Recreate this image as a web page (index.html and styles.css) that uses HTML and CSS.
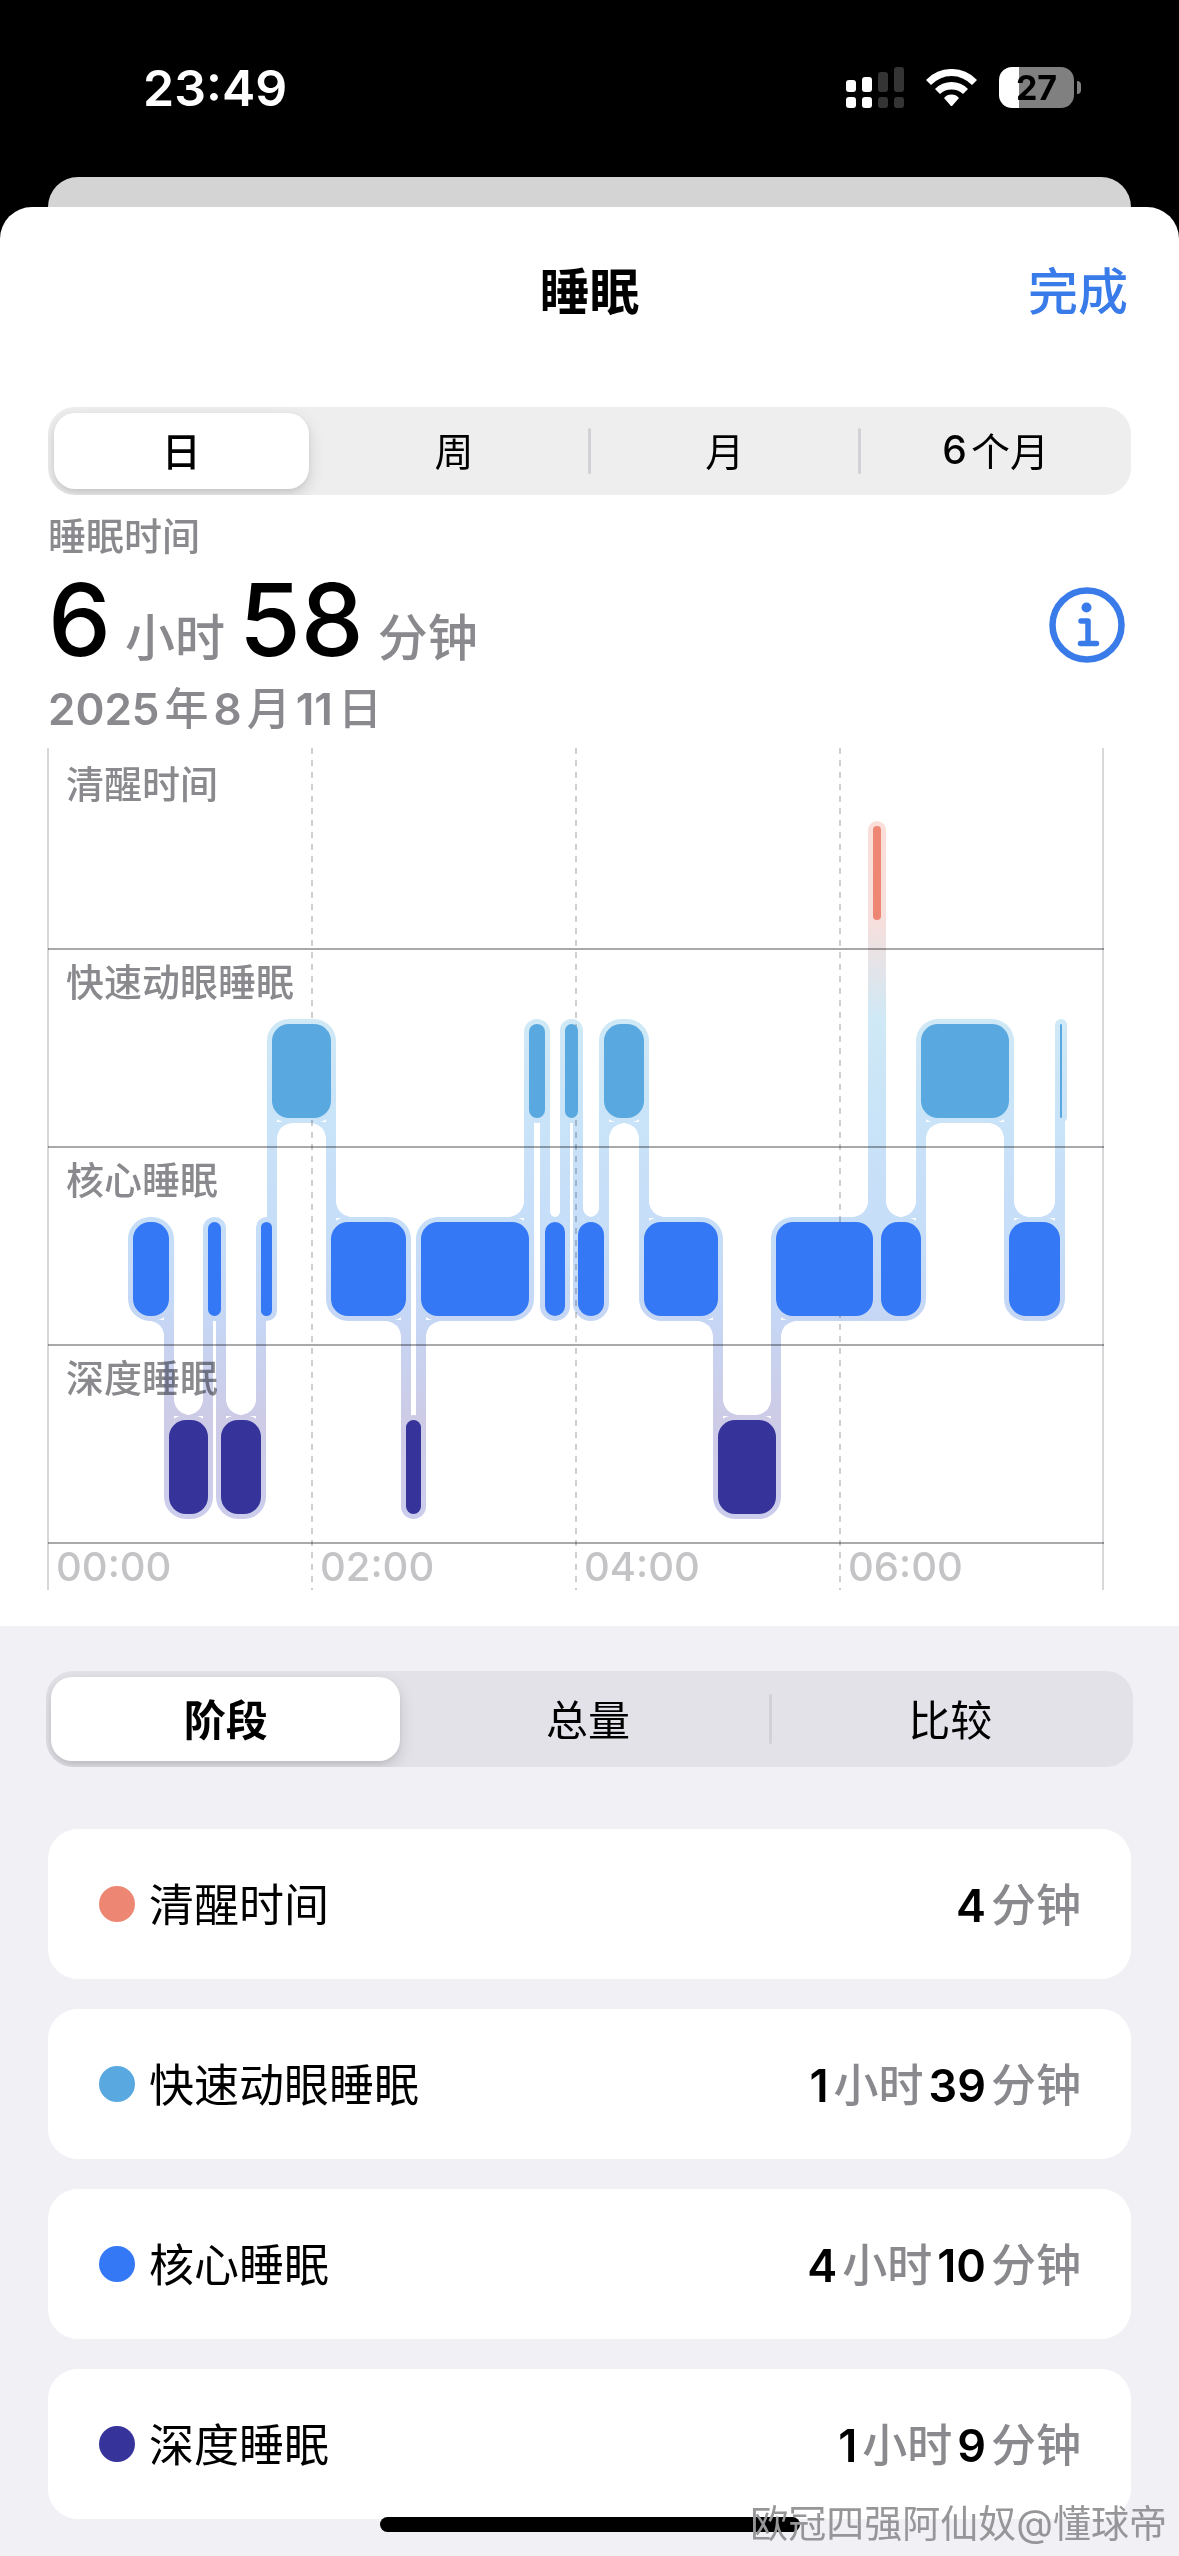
FILE: index.html
```html
<!DOCTYPE html>
<html lang="zh-CN">
<head>
  <meta charset="utf-8">
  <meta name="viewport" content="width=device-width, initial-scale=1">
  <title>睡眠</title>
  <link rel="stylesheet" href="styles.css">
</head>
<body>
  <div class="status-bar">
    <time class="clock">23:49</time>
    <div class="status-icons">
      <svg class="signal" viewBox="0 0 58 41" aria-hidden="true">
        <g fill="#fff">
          <rect x="0" y="13" width="10" height="12" rx="3"/>
          <rect x="16" y="10" width="10" height="15" rx="3"/>
          <rect x="0" y="30" width="10" height="11" rx="3"/>
          <rect x="16" y="30" width="10" height="11" rx="3"/>
        </g>
        <g fill="#343434">
          <rect x="32" y="5" width="10" height="20" rx="3"/>
          <rect x="48" y="0" width="10" height="25" rx="3"/>
          <rect x="32" y="30" width="10" height="11" rx="3"/>
          <rect x="48" y="30" width="10" height="11" rx="3"/>
        </g>
      </svg>
      <svg class="wifi" viewBox="0 0 51 37" aria-hidden="true">
        <path fill="#fff" d="M0 11A35 35 0 0 1 51 11L46 16A28 28 0 0 0 5 16ZM9 20A23 23 0 0 1 42 20L37 25A17 17 0 0 0 14 25ZM18 29A10 10 0 0 1 33 29L26.500 36.500Q25.500 37.500 24.500 36.500Z"/>
      </svg>
      <div class="battery"><span class="battery-level">27</span></div>
    </div>
  </div>

  <div class="sheet-behind"></div>

  <main class="sheet">
    <section class="overview">
      <header class="title-bar">
        <h1>睡眠</h1>
        <button class="done" type="button">完成</button>
      </header>

      <div class="segmented range" role="radiogroup" aria-label="时间范围">
        <label class="segment"><input type="radio" name="range" checked><span>日</span></label>
        <label class="segment"><input type="radio" name="range"><span>周</span></label>
        <label class="segment"><input type="radio" name="range"><span>月</span></label>
        <label class="segment"><input type="radio" name="range"><span><b>6</b>个月</span></label>
      </div>

      <div class="summary">
        <div>
          <h2>睡眠时间</h2>
          <p class="total"><b>6</b><span>小时</span><b>58</b><span>分钟</span></p>
          <p class="date"><b>2025</b><span>年</span><b>8</b><span>月</span><b>11</b><span>日</span></p>
        </div>
        <button class="info" type="button" aria-label="关于睡眠">
          <svg viewBox="0 0 76 76" aria-hidden="true">
            <circle cx="38" cy="38" r="34.500" fill="none" stroke="currentColor" stroke-width="6.500"/>
            <circle cx="37.500" cy="20.500" r="5" fill="currentColor"/>
            <path d="M32 34H39V56M31.500 56.500H47.500" fill="none" stroke="currentColor" stroke-width="5.500" stroke-linecap="round" stroke-linejoin="round"/>
          </svg>
        </button>
      </div>

      <div class="chart">
        <div class="lane lane-first">清醒时间</div>
        <div class="lane">快速动眼睡眠</div>
        <div class="lane">核心睡眠</div>
        <div class="lane">深度睡眠</div>
        <div class="hours"><span>00:00</span><span>02:00</span><span>04:00</span><span>06:00</span></div>
        <svg class="plot" viewBox="0 0 1056 842" preserveAspectRatio="none" aria-hidden="true">
          <defs>
            <linearGradient id="halo" gradientUnits="userSpaceOnUse" x1="0" y1="78" x2="0" y2="766">
              <stop offset="0" stop-color="#fbded9"/>
              <stop offset=".14" stop-color="#f6dfdc"/>
              <stop offset=".28" stop-color="#cfe9f6"/>
              <stop offset=".42" stop-color="#c9e3f8"/>
              <stop offset=".58" stop-color="#c6def8"/>
              <stop offset=".71" stop-color="#c5d7f5"/>
              <stop offset=".86" stop-color="#cdcbe6"/>
              <stop offset="1" stop-color="#cccdec"/>
            </linearGradient>
          </defs>
          <g class="edges"><path d="M0 0V842M1055 0V842"/></g>
          <g class="ticks"><path d="M264 0V842M528 0V842M792 0V842"/></g>
          <g id="halos" class="halos" fill="url(#halo)"></g>
          <g id="stages"></g>
        </svg>
      </div>
    </section>

    <section class="details">
      <div class="segmented breakdown" role="radiogroup" aria-label="数据视图">
        <label class="segment"><input type="radio" name="view" checked><span>阶段</span></label>
        <label class="segment"><input type="radio" name="view"><span>总量</span></label>
        <label class="segment"><input type="radio" name="view"><span>比较</span></label>
      </div>
      <ul class="cards">
        <li class="card"><i class="dot awake"></i><span class="name">清醒时间</span><span class="value"><b>4</b>分钟</span></li>
        <li class="card"><i class="dot rem"></i><span class="name">快速动眼睡眠</span><span class="value"><b>1</b>小时<b>39</b>分钟</span></li>
        <li class="card"><i class="dot core"></i><span class="name">核心睡眠</span><span class="value"><b>4</b>小时<b>10</b>分钟</span></li>
        <li class="card"><i class="dot deep"></i><span class="name">深度睡眠</span><span class="value"><b>1</b>小时<b>9</b>分钟</span></li>
      </ul>
    </section>
  </main>

  <div class="home-indicator"></div>
  <div class="watermark">欧冠四强阿仙奴@懂球帝</div>
  <script src="chart.js"></script>
</body>
</html>
```
FILE: chart.js
```js
// Top edge of each lane's blocks, in plot units.
const LANES = {
  awake: { top: 78, color: '#ed8773' },
  rem: { top: 276, color: '#59a9e0' },
  core: { top: 474, color: '#3478f6' },
  deep: { top: 672, color: '#36349b' }
};
const BLOCK = 94;
const PAD = 5;

// Consecutive stages: [stage, start, end].
const NIGHT = [
  ['core', 85, 121], ['deep', 121, 160], ['core', 160, 173], ['deep', 173, 213],
  ['core', 213, 224], ['rem', 224, 283], ['core', 283, 358], ['deep', 358, 373],
  ['core', 373, 481], ['rem', 481, 497], ['core', 497, 517], ['rem', 517, 530],
  ['core', 530, 556], ['rem', 556, 596], ['core', 596, 670], ['deep', 670, 728],
  ['core', 728, 825], ['awake', 825, 833], ['core', 833, 873], ['rem', 873, 961],
  ['core', 961, 1012], ['rem', 1012, 1014]
];

const NS = 'http://www.w3.org/2000/svg';
const halos = document.getElementById('halos');
const stages = document.getElementById('stages');

function add(parent, tag, attrs) {
  const el = document.createElementNS(NS, tag);
  for (const key in attrs) el.setAttribute(key, attrs[key]);
  parent.appendChild(el);
}

// Fills the inner corner where a connector meets a block's halo.
function fillet(x, y, side, down, width) {
  const r = Math.min(14, (width - PAD * 2) / 2);
  if (r < 5) return;
  const dx = side * r;
  const dy = down * r;
  add(halos, 'path', {
    d: `M${x + dx} ${y - down}V${y}Q${x + dx * 0.15} ${y + dy * 0.15} ${x} ${y + dy}H${x - side}V${y - down}Z`
  });
}

NIGHT.forEach(([stage, start, end], i) => {
  const { top, color } = LANES[stage];
  const width = end - start;
  const radius = Math.min(17, width / 2);
  add(halos, 'rect', {
    x: start - PAD, y: top - PAD, width: width + PAD * 2,
    height: BLOCK + PAD * 2, rx: radius + PAD
  });
  add(stages, 'rect', { x: start, y: top, width, height: BLOCK, rx: radius, fill: color });

  const next = NIGHT[i + 1];
  if (!next) return;
  const nextTop = LANES[next[0]].top;
  const nextWidth = next[2] - next[1];
  const upper = Math.min(top, nextTop);
  const lower = Math.max(top, nextTop);
  add(halos, 'rect', {
    x: end - PAD, y: upper + BLOCK / 2, width: PAD * 2, height: lower - upper
  });
  const down = nextTop > top ? 1 : -1;
  const leave = down > 0 ? top + BLOCK + PAD : top - PAD;
  const arrive = down > 0 ? nextTop - PAD : nextTop + BLOCK + PAD;
  fillet(end - PAD, leave, -1, down, width);
  fillet(end + PAD, arrive, 1, -down, nextWidth);
});

// The two core blocks beside the short awakening share one halo.
add(halos, 'rect', { x: 810, y: 469, width: 40, height: 104 });
```
FILE: styles.css
```css
:root {
  --gutter: 48px;
  --blue: #3a7bea;
  --gray: #8a8a8e;
}

* {
  box-sizing: border-box;
}

body {
  position: relative;
  margin: 0;
  background: #000;
  color: #000;
  font-family: Inter, "Noto Sans CJK SC", sans-serif;
}

h1, h2, p, ul {
  margin: 0;
  padding: 0;
}

button {
  padding: 0;
  border: 0;
  background: none;
  color: var(--blue);
  font: inherit;
}

/* Status bar */
.status-bar {
  display: flex;
  justify-content: space-between;
  align-items: center;
  height: 177px;
  padding: 0 98px 2px 143px;
  color: #fff;
}

.clock {
  font-size: 50px;
  font-weight: 600;
}

.status-icons {
  display: flex;
  align-items: center;
  gap: 22px;
}

.signal {
  width: 58px;
  height: 41px;
}

.wifi {
  width: 51px;
  height: 37px;
}

.battery {
  position: relative;
  width: 75px;
  height: 41px;
  margin-right: 7px;
}

.battery::after {
  content: "";
  position: absolute;
  top: 14px;
  right: -7px;
  width: 4px;
  height: 13px;
  border-radius: 0 4px 4px 0;
  background: #808080;
}

.battery-level {
  display: block;
  border-radius: 13px;
  background: linear-gradient(90deg, #fff 20px, #808080 20px);
  color: #000;
  font-size: 34px;
  font-weight: 700;
  line-height: 41px;
  text-align: center;
}

/* Sheets */
.sheet-behind {
  height: 30px;
  margin: 0 var(--gutter);
  border-radius: 30px 30px 0 0;
  background: #d4d4d5;
}

.sheet {
  overflow: hidden;
  border-radius: 32px 32px 0 0;
  background: #fff;
}

.overview {
  padding-bottom: 36px;
}

.title-bar {
  display: grid;
  grid-template-columns: 1fr auto 1fr;
  align-items: center;
  height: 162px;
  margin: 0 51px 38px;
  font-size: 50px;
}

.title-bar h1 {
  grid-column: 2;
  font-size: inherit;
  font-weight: 700;
}

.done {
  justify-self: end;
  font-weight: 500;
}

/* Segmented controls */
.segmented {
  display: grid;
  grid-auto-flow: column;
  grid-auto-columns: 1fr;
  overflow: hidden;
  border-radius: 27px;
}

.range {
  height: 88px;
  margin: 0 var(--gutter);
  background: #eeeeef;
  font-size: 39px;
}

.breakdown {
  height: 96px;
  margin: 0 46px;
  background: #e3e2e8;
  font-size: 42px;
}

.segment {
  position: relative;
  display: grid;
  padding: 6px;
}

.segment:first-child {
  padding-right: 10px;
}

.breakdown .segment {
  padding: 6px 8px 6px 5px;
}

.segment input {
  position: absolute;
  inset: 0;
  margin: 0;
  opacity: 0;
}

.segment span {
  display: flex;
  align-items: center;
  justify-content: center;
  gap: 4px;
  padding-bottom: 4px;
  border-radius: 21px;
}

.segment b {
  font-weight: 500;
}

.segment input:checked + span {
  background: #fff;
  box-shadow: 0 6px 16px rgba(0, 0, 0, .14), 0 2px 4px rgba(0, 0, 0, .06);
  font-weight: 500;
}

.breakdown .segment input:checked + span {
  font-weight: 700;
}

.segment + .segment::before {
  content: "";
  position: absolute;
  top: 24%;
  bottom: 24%;
  left: -2px;
  width: 3px;
  border-radius: 2px;
  background: #d2d2d6;
}

.segment:has(input:checked) + .segment::before {
  display: none;
}

/* Summary */
.summary {
  display: flex;
  justify-content: space-between;
  align-items: center;
  padding: 16px 54px 9px 48px;
  color: var(--gray);
}

.summary h2 {
  font-size: 38px;
  font-weight: 500;
  line-height: 50px;
}

.total {
  display: flex;
  align-items: baseline;
  gap: 14px;
  height: 118px;
}

.total b {
  color: #000;
  font-size: 100px;
  font-weight: 500;
  line-height: 118px;
}

.total span {
  font-size: 50px;
  font-weight: 500;
  line-height: 50px;
}

.date {
  display: flex;
  align-items: baseline;
  gap: 5px;
  font-size: 44px;
  font-weight: 500;
  line-height: 60px;
}

.date b {
  font-weight: 600;
}

.info {
  width: 76px;
  height: 76px;
}

.info svg {
  display: block;
}

/* Hypnogram */
.chart {
  position: relative;
  margin: 0 75px 0 48px;
  color: var(--gray);
}

.lane {
  height: 198px;
  padding: 6px 18px;
  border-bottom: 2px solid #a9a9ab;
  font-size: 38px;
  font-weight: 500;
  line-height: 52px;
}

.lane-first {
  height: 202px;
  padding-top: 10px;
}

.hours {
  display: grid;
  grid-template-columns: repeat(4, 1fr);
  height: 46px;
  color: #c4c4c6;
  font-size: 40px;
  font-weight: 500;
  line-height: 46px;
}

.hours span {
  padding-left: 8px;
}

.plot {
  position: absolute;
  inset: 0;
  width: 100%;
  height: 100%;
  overflow: visible;
  mix-blend-mode: multiply;
}

.edges {
  stroke: #d8d8da;
  stroke-width: 2;
}

.ticks {
  stroke: #cdcdd0;
  stroke-width: 2;
  stroke-dasharray: 6 6;
}

.halos {
  mix-blend-mode: multiply;
}

/* Stage totals */
.details {
  padding: 45px 0 37px;
  background: #f1f0f5;
}

.cards {
  display: grid;
  gap: 30px;
  margin: 62px var(--gutter) 0;
  list-style: none;
}

.card {
  display: flex;
  align-items: center;
  height: 150px;
  padding: 0 50px 0 51px;
  border-radius: 30px;
  background: #fff;
  font-size: 45px;
}

.dot {
  width: 36px;
  height: 36px;
  margin-right: 14px;
  border-radius: 50%;
}

.awake { background: #ed8773; }
.rem { background: #59a9e0; }
.core { background: #3478f6; }
.deep { background: #36349b; }

.name,
.value {
  padding-bottom: 4px;
}

.value {
  display: flex;
  align-items: baseline;
  gap: 5px;
  margin-left: auto;
  color: var(--gray);
  font-weight: 500;
}

.value b {
  color: #000;
  font-weight: 600;
}

/* Overlays */
.home-indicator {
  position: absolute;
  bottom: 24px;
  left: 50%;
  width: 420px;
  height: 15px;
  margin-left: -210px;
  border-radius: 8px;
  background: #000;
}

.watermark {
  position: absolute;
  right: 12px;
  bottom: 8px;
  color: #969698;
  font-size: 38px;
  font-weight: 400;
  line-height: 50px;
}
```
